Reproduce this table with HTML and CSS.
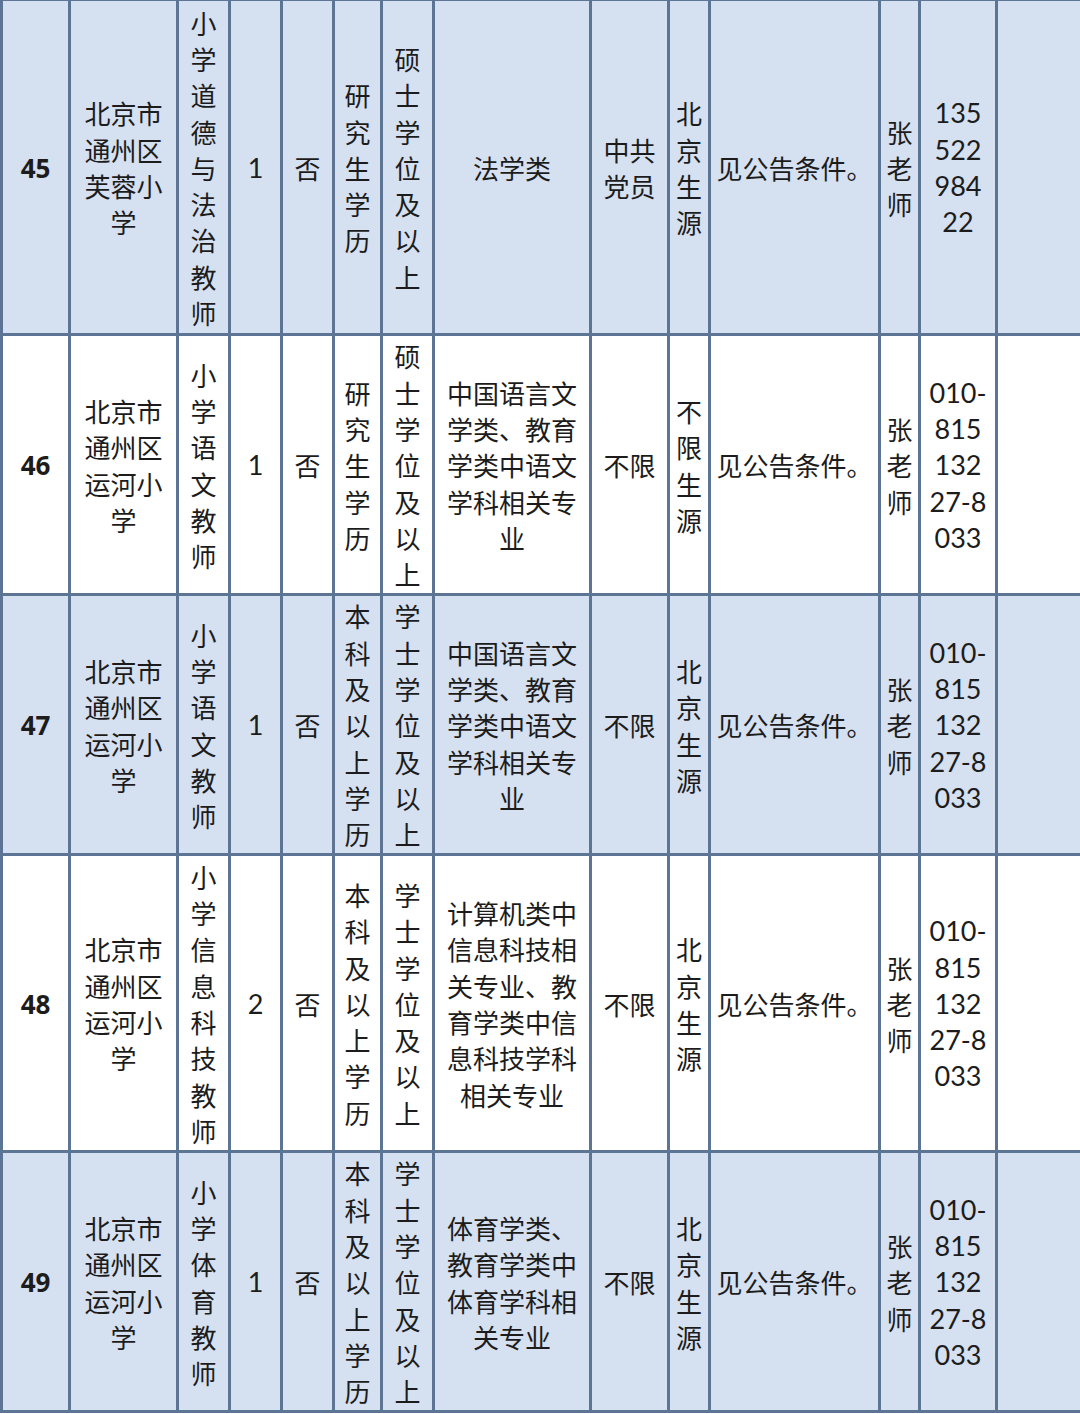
FILE: index.html
```html
<!DOCTYPE html>
<html lang="zh">
<head>
<meta charset="utf-8">
<link rel="stylesheet" href="styles.css">
</head>
<body>
<table class="grid">
<colgroup>
<col class="c1"><col class="c2"><col class="c3"><col class="c4"><col class="c5"><col class="c6"><col class="c7"><col class="c8"><col class="c9"><col class="c10"><col class="c11"><col class="c12"><col class="c13"><col class="c14">
</colgroup>
<tbody>
<tr class="r45 blue">
<td class="num">45</td>
<td>北京市<br>通州区<br>芙蓉小<br>学</td>
<td>小<br>学<br>道<br>德<br>与<br>法<br>治<br>教<br>师</td>
<td class="lat">1</td>
<td>否</td>
<td>研<br>究<br>生<br>学<br>历</td>
<td>硕<br>士<br>学<br>位<br>及<br>以<br>上</td>
<td>法学类</td>
<td>中共<br>党员</td>
<td>北<br>京<br>生<br>源</td>
<td>见公告条件。</td>
<td>张<br>老<br>师</td>
<td class="lat">135<br>522<br>984<br>22</td>
<td></td>
</tr>
<tr class="r46">
<td class="num">46</td>
<td>北京市<br>通州区<br>运河小<br>学</td>
<td>小<br>学<br>语<br>文<br>教<br>师</td>
<td class="lat">1</td>
<td>否</td>
<td>研<br>究<br>生<br>学<br>历</td>
<td>硕<br>士<br>学<br>位<br>及<br>以<br>上</td>
<td>中国语言文<br>学类、教育<br>学类中语文<br>学科相关专<br>业</td>
<td>不限</td>
<td>不<br>限<br>生<br>源</td>
<td>见公告条件。</td>
<td>张<br>老<br>师</td>
<td class="lat">010-<br>815<br>132<br>27-8<br>033</td>
<td></td>
</tr>
<tr class="r47 blue">
<td class="num">47</td>
<td>北京市<br>通州区<br>运河小<br>学</td>
<td>小<br>学<br>语<br>文<br>教<br>师</td>
<td class="lat">1</td>
<td>否</td>
<td>本<br>科<br>及<br>以<br>上<br>学<br>历</td>
<td>学<br>士<br>学<br>位<br>及<br>以<br>上</td>
<td>中国语言文<br>学类、教育<br>学类中语文<br>学科相关专<br>业</td>
<td>不限</td>
<td>北<br>京<br>生<br>源</td>
<td>见公告条件。</td>
<td>张<br>老<br>师</td>
<td class="lat">010-<br>815<br>132<br>27-8<br>033</td>
<td></td>
</tr>
<tr class="r48">
<td class="num">48</td>
<td>北京市<br>通州区<br>运河小<br>学</td>
<td>小<br>学<br>信<br>息<br>科<br>技<br>教<br>师</td>
<td class="lat">2</td>
<td>否</td>
<td>本<br>科<br>及<br>以<br>上<br>学<br>历</td>
<td>学<br>士<br>学<br>位<br>及<br>以<br>上</td>
<td>计算机类中<br>信息科技相<br>关专业、教<br>育学类中信<br>息科技学科<br>相关专业</td>
<td>不限</td>
<td>北<br>京<br>生<br>源</td>
<td>见公告条件。</td>
<td>张<br>老<br>师</td>
<td class="lat">010-<br>815<br>132<br>27-8<br>033</td>
<td></td>
</tr>
<tr class="r49 blue">
<td class="num">49</td>
<td>北京市<br>通州区<br>运河小<br>学</td>
<td>小<br>学<br>体<br>育<br>教<br>师</td>
<td class="lat">1</td>
<td>否</td>
<td>本<br>科<br>及<br>以<br>上<br>学<br>历</td>
<td>学<br>士<br>学<br>位<br>及<br>以<br>上</td>
<td>体育学类、<br>教育学类中<br>体育学科相<br>关专业</td>
<td>不限</td>
<td>北<br>京<br>生<br>源</td>
<td>见公告条件。</td>
<td>张<br>老<br>师</td>
<td class="lat">010-<br>815<br>132<br>27-8<br>033</td>
<td></td>
</tr>
</tbody>
</table>
</body>
</html>
```

FILE: styles.css
```css
html, body {
  margin: 0;
  padding: 0;
  background: #ffffff;
  overflow: hidden;
}
body {
  width: 1080px;
  height: 1414px;
}
.grid {
  border-collapse: collapse;
  table-layout: fixed;
  width: 1110px;
  margin-top: -2px;
  font-family: "Noto Sans CJK SC", "Noto Sans", sans-serif;
  font-size: 26px;
  line-height: 36.3px;
  color: #1c1c1c;
}
.grid td {
  border: 3px solid #5d7595;
  padding: 2px 0 0 0;
  text-align: center;
  vertical-align: middle;
  white-space: nowrap;
  overflow: hidden;
}
.blue td {
  background: #d5e0f0;
}
.c1 { width: 68px; }
.c2 { width: 108px; }
.c3 { width: 52px; }
.c4 { width: 52px; }
.c5 { width: 52px; }
.c6 { width: 48px; }
.c7 { width: 52px; }
.c8 { width: 157px; }
.c9 { width: 78px; }
.c10 { width: 41px; }
.c11 { width: 170px; }
.c12 { width: 40px; }
.c13 { width: 77px; }
.c14 { width: 115px; }
.r45 td { height: 330px; }
.r46 td { height: 255px; }
.r47 td { height: 255px; }
.r48 td { height: 292px; }
.r49 td { height: 255px; }
.num {
  font-family: "Open Sans", "Noto Sans", sans-serif;
  font-weight: 700;
  font-size: 26px;
}
.lat {
  font-family: "Lato", "Noto Sans", sans-serif;
  font-size: 27px;
}
```
